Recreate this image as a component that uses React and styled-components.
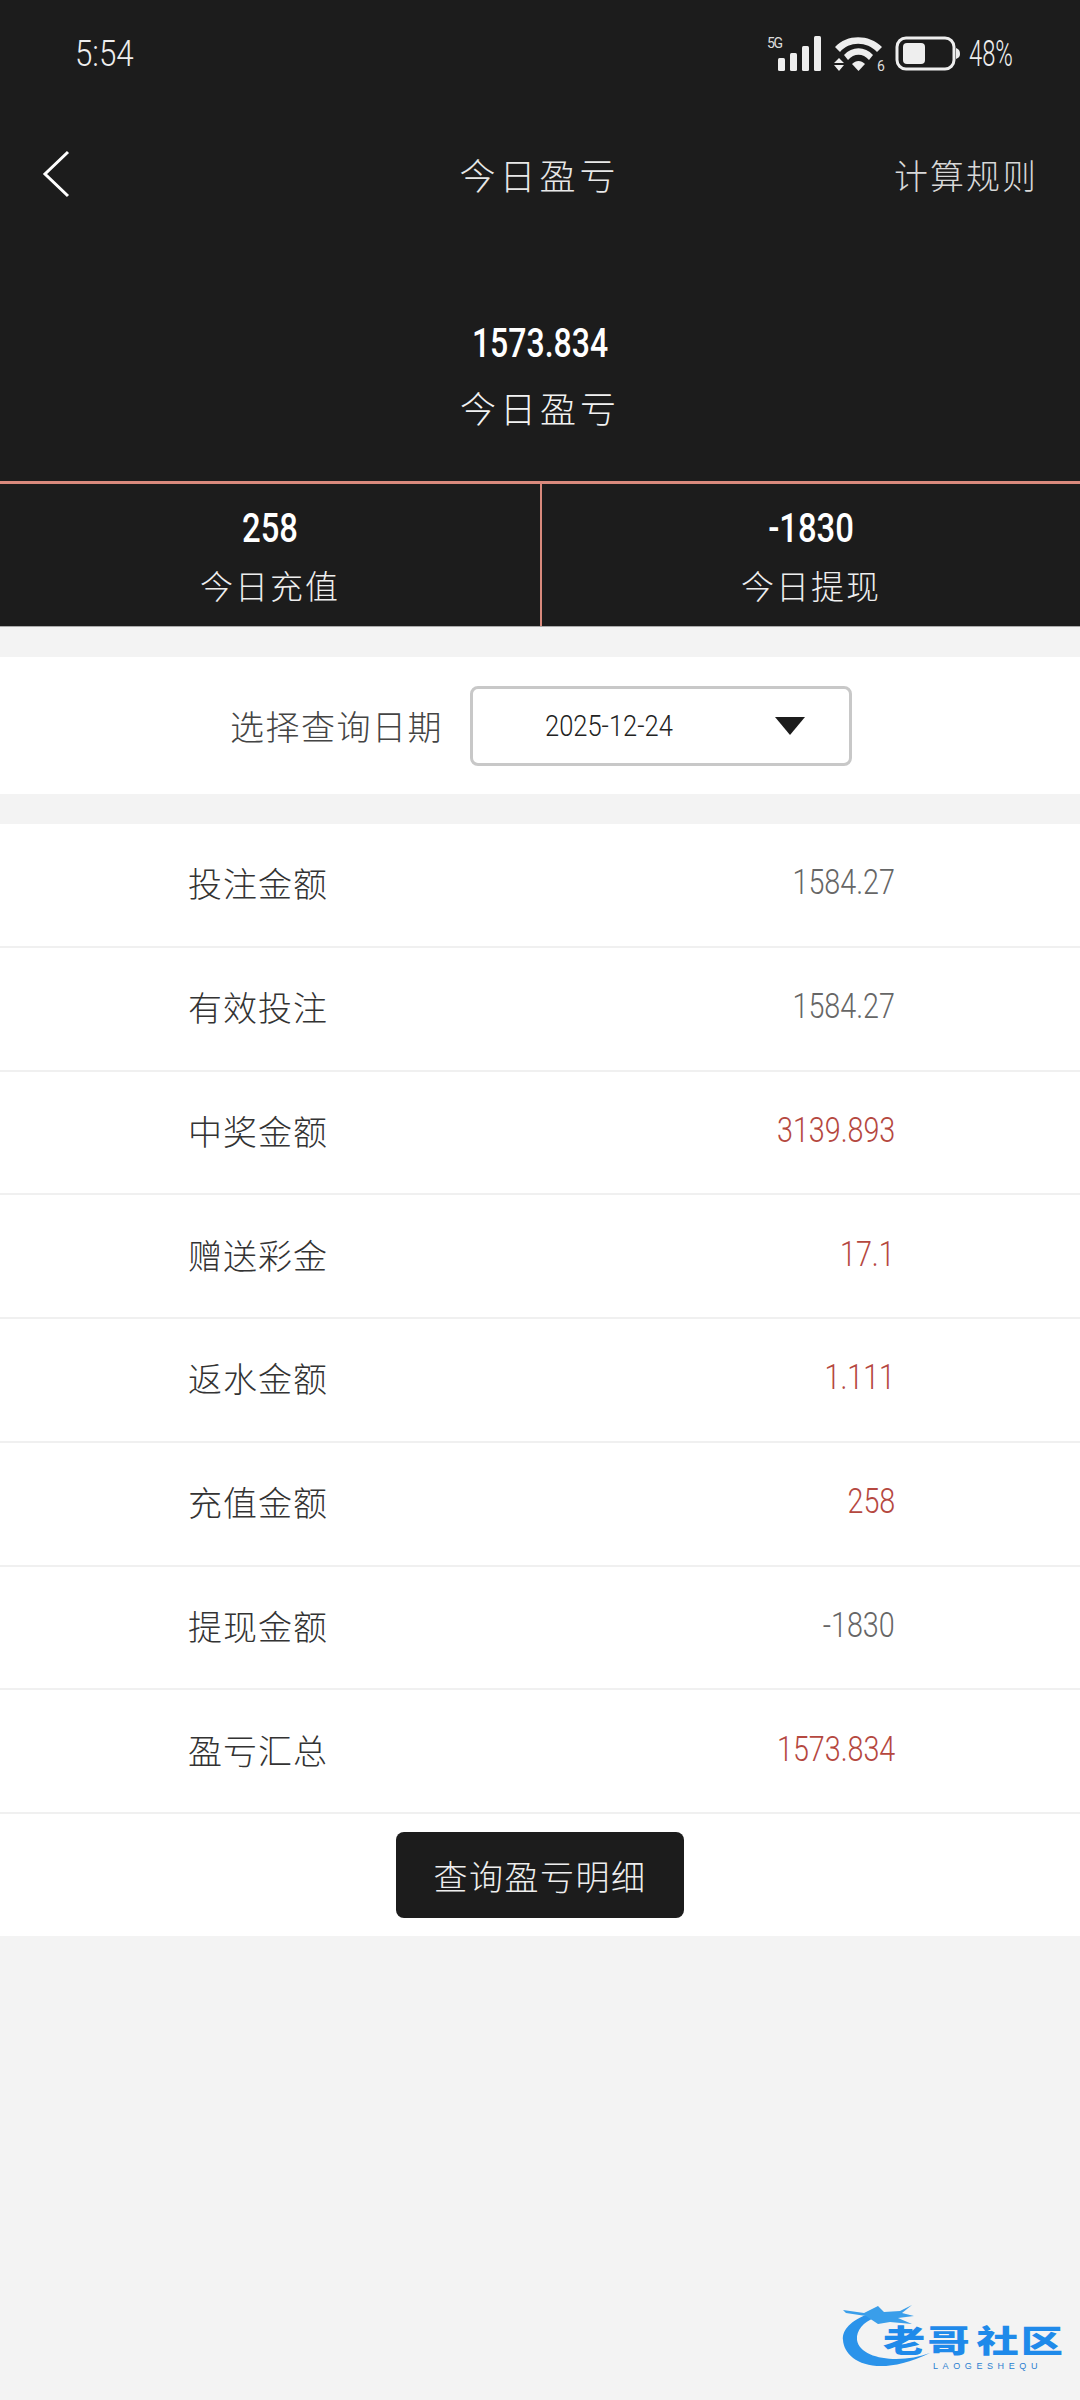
import React from 'react';
import styled, { createGlobalStyle } from 'styled-components';

const GlobalStyle = createGlobalStyle`
	html, body {
		margin: 0;
		padding: 0;
		background: #f3f3f3;
	}
	* {
		box-sizing: border-box;
	}
`;

const cjk = `"Noto Sans CJK SC", "Noto Sans", sans-serif`;
const digits = `Roboto, "Liberation Sans", sans-serif`;

const Page = styled.div`
	position: relative;
	width: 1080px;
	height: 2400px;
	overflow: hidden;
	background: #f3f3f3;
	font-family: ${cjk};
`;

const Hero = styled.header`
	background: #1c1c1c;
	color: #fff;
	height: 627px;
	display: flex;
	flex-direction: column;
`;

const StatusBar = styled.div`
	height: 106px;
	padding: 35px 44px 0 75px;
	display: flex;
	justify-content: space-between;
	align-items: flex-start;
`;

// the numbers in the picture are a tall narrow hand, so squeeze them
const Digits = styled.span`
	display: inline-block;
	font-family: ${digits};
	transform: scaleX(${(p) => p.$squeeze});
	transform-origin: ${(p) => p.$origin || 'center'};
`;

const StatusText = styled(Digits)`
	font-size: 36px;
	line-height: 38px;
	font-weight: 300;
	color: #eee;
`;

const StatusIcons = styled.div`
	display: flex;
	align-items: flex-start;
	gap: 8px;
`;

const Nav = styled.nav`
	height: 136px;
	padding: 0 42px 0 41px;
	display: grid;
	grid-template-columns: 1fr auto 1fr;
	align-items: center;
`;

const BackButton = styled.button`
	background: none;
	border: 0;
	padding: 0;
	width: 30px;
	height: 48px;
	display: block;
`;

const NavTitle = styled.h1`
	margin: 0;
	font-size: 36px;
	font-weight: 300;
	letter-spacing: 4px;
	color: #e8e8e8;
`;

const NavLink = styled.span`
	justify-self: end;
	font-size: 34px;
	font-weight: 300;
	letter-spacing: 2px;
	color: #d8d8d8;
`;

const Summary = styled.div`
	height: 239px;
	padding-top: 79px;
	text-align: center;
`;

const SummaryValue = styled(Digits)`
	display: block;
	font-size: 40px;
	line-height: 46px;
	font-weight: 500;
	color: #fff;
`;

const SummaryLabel = styled.div`
	margin-top: 15px;
	font-size: 36px;
	line-height: 50px;
	font-weight: 300;
	letter-spacing: 4px;
	color: #f2f2f2;
`;

const Stats = styled.div`
	flex: 1;
	display: grid;
	grid-template-columns: 1fr 1fr;
	border-top: 3px solid #d9897c;
	border-bottom: 1px solid #aaa;
`;

const Stat = styled.div`
	text-align: center;
	padding-top: 22px;
	border-left: ${(p) => (p.$divided ? '2px solid #d9897c' : '0')};
`;

const StatValue = styled(Digits)`
	display: block;
	font-size: 40px;
	line-height: 46px;
	font-weight: 500;
`;

const StatLabel = styled.div`
	margin-top: 10px;
	font-size: 33px;
	line-height: 46px;
	font-weight: 300;
	letter-spacing: 2px;
	color: #eee;
`;

const DateBar = styled.section`
	margin-top: 30px;
	height: 137px;
	background: #fff;
	display: flex;
	align-items: center;
	padding-left: 230px;
	gap: 27px;
`;

const DateLabel = styled.label`
	font-size: 34px;
	font-weight: 300;
	letter-spacing: 1.5px;
	color: #444;
`;

const DateSelect = styled.div`
	width: 382px;
	height: 80px;
	border: 3px solid #c8c8c8;
	border-radius: 8px;
	padding: 0 44px 0 72px;
	display: flex;
	align-items: center;
	justify-content: space-between;
`;

const DateValue = styled(Digits)`
	font-size: 29px;
	font-weight: 300;
	color: #222;
`;

const Arrow = styled.i`
	width: 0;
	height: 0;
	border-left: 15px solid transparent;
	border-right: 15px solid transparent;
	border-top: 18px solid #1c1c1c;
`;

const Table = styled.section`
	margin-top: 30px;
	background: #fff;
`;

const Row = styled.div`
	height: 123.75px;
	padding: 0 185px 4px 188px;
	border-bottom: 2px solid #f0f0f0;
	display: flex;
	align-items: center;
	justify-content: space-between;
`;

const RowLabel = styled.span`
	font-size: 34px;
	font-weight: 300;
	letter-spacing: 1px;
	color: #333;
`;

const RowValue = styled(Digits)`
	font-size: 35px;
	font-weight: 300;
	color: ${(p) => (p.$red ? '#b5483f' : '#666')};
`;

const ButtonBar = styled.div`
	height: 122px;
	display: flex;
	align-items: center;
	justify-content: center;
`;

const DetailButton = styled.button`
	width: 288px;
	height: 86px;
	background: #1c1c1c;
	color: #eee;
	border: 0;
	border-radius: 8px;
	font-family: ${cjk};
	font-size: 34px;
	font-weight: 300;
	letter-spacing: 1.5px;
`;

const Watermark = styled.div`
	position: absolute;
	left: 840px;
	top: 2302px;
	width: 230px;
	height: 84px;
`;

const LogoName = styled.div`
	position: absolute;
	left: 43px;
	top: 19px;
	width: 180px;
	display: flex;
	justify-content: space-between;
	font-size: 31px;
	line-height: 36px;
	font-weight: 900;
	color: #1f8aea;
`;

const LogoChar = styled.span`
	display: inline-block;
	transform: scaleX(1.36);
	transform-origin: ${(p) => p.$origin};
`;

const LogoSub = styled.div`
	position: absolute;
	left: 93px;
	top: 60px;
	font-family: "Liberation Sans", sans-serif;
	font-size: 9px;
	line-height: 9px;
	letter-spacing: 4.6px;
	color: #2b7fd0;
`;

const rows = [
	['投注金额', '1584.27', false],
	['有效投注', '1584.27', false],
	['中奖金额', '3139.893', true],
	['赠送彩金', '17.1', true],
	['返水金额', '1.111', true],
	['充值金额', '258', true],
	['提现金额', '-1830', false],
	['盈亏汇总', '1573.834', true],
];

const NetworkIcons = () => (
	<svg width="120" height="40" viewBox="0 0 120 40">
		<text x="0" y="13" fontFamily="Roboto, sans-serif" fontSize="14" fill="#ddd" textLength="16">5G</text>
		<rect x="11" y="23" width="7" height="13" rx="1.5" fill="#eee" />
		<rect x="23" y="18" width="7" height="18" rx="1.5" fill="#eee" />
		<rect x="35" y="11" width="7" height="25" rx="1.5" fill="#eee" />
		<rect x="47" y="1" width="7" height="35" rx="1.5" fill="#eee" />
		<path d="M68 12 C80 -1 102 -1 115 12 L110 17 C100 6 82 6 73 17 Z" fill="#eee" />
		<path d="M77 20 C85 11 98 11 106 20 L102 25 C96 18 87 18 81 25 Z" fill="#eee" />
		<path d="M85 29 C89 25 94 25 98 29 L91.500 36 Z" fill="#eee" />
		<path d="M72 23 L77 28 L67 28 Z M67 30 L77 30 L72 36 Z" fill="#eee" />
		<text x="110" y="36" fontFamily="Roboto, sans-serif" fontSize="14" fill="#ddd">6</text>
	</svg>
);

const BatteryIcon = () => (
	<svg width="66" height="38" viewBox="0 0 66 38">
		<rect x="2" y="3" width="57" height="31" rx="9" fill="none" stroke="#eee" strokeWidth="3" />
		<rect x="8" y="8" width="22" height="21" rx="4" fill="#eee" />
		<path d="M61 13 C64 14 65 16 65 19 C65 21 64 23 61 24 Z" fill="#eee" />
	</svg>
);

const App = () => (
	<Page>
		<GlobalStyle />
		<Hero>
			<StatusBar>
				<StatusText $squeeze={0.87} $origin="left">5:54</StatusText>
				<StatusIcons>
					<NetworkIcons />
					<BatteryIcon />
					<StatusText $squeeze={0.66} $origin="left">48%</StatusText>
				</StatusIcons>
			</StatusBar>
			<Nav>
				<BackButton aria-label="返回">
					<svg width="30" height="48" viewBox="0 0 30 48">
						<path d="M27 2 L4 24 L27 46" fill="none" stroke="#fff" strokeWidth="3" />
					</svg>
				</BackButton>
				<NavTitle>今日盈亏</NavTitle>
				<NavLink>计算规则</NavLink>
			</Nav>
			<Summary>
				<SummaryValue $squeeze={0.8}>1573.834</SummaryValue>
				<SummaryLabel>今日盈亏</SummaryLabel>
			</Summary>
			<Stats>
				<Stat>
					<StatValue $squeeze={0.82}>258</StatValue>
					<StatLabel>今日充值</StatLabel>
				</Stat>
				<Stat $divided>
					<StatValue $squeeze={0.82}>-1830</StatValue>
					<StatLabel>今日提现</StatLabel>
				</Stat>
			</Stats>
		</Hero>
		<DateBar>
			<DateLabel>选择查询日期</DateLabel>
			<DateSelect>
				<DateValue $squeeze={0.88} $origin="left">2025-12-24</DateValue>
				<Arrow />
			</DateSelect>
		</DateBar>
		<Table>
			{rows.map(([label, value, red]) => (
				<Row key={label}>
					<RowLabel>{label}</RowLabel>
					<RowValue $red={red} $squeeze={0.82} $origin="right">{value}</RowValue>
				</Row>
			))}
			<ButtonBar>
				<DetailButton>查询盈亏明细</DetailButton>
			</ButtonBar>
		</Table>
		<Watermark>
			<svg width="100" height="84" viewBox="0 0 100 84">
				<path d="M26 13 C8 20 2 30 3 38 C4 58 34 78 90 51 C62 62 20 58 17 38 C16 28 24 20 34 16 Z" fill="#2b93ea" />
				<path d="M3 8 L24 11 L38 4 L44 10 L60 9 L72 3 L62 11 L74 14 L58 16 L72 22 L50 20 L38 22 L26 14 L6 11 Z" fill="#3a9eea" />
			</svg>
			<LogoName>
				<LogoChar $origin="left">老</LogoChar>
				<LogoChar $origin="center">哥</LogoChar>
				<LogoChar $origin="center">社</LogoChar>
				<LogoChar $origin="right">区</LogoChar>
			</LogoName>
			<LogoSub>LAOGESHEQU</LogoSub>
		</Watermark>
	</Page>
);

export default App;
